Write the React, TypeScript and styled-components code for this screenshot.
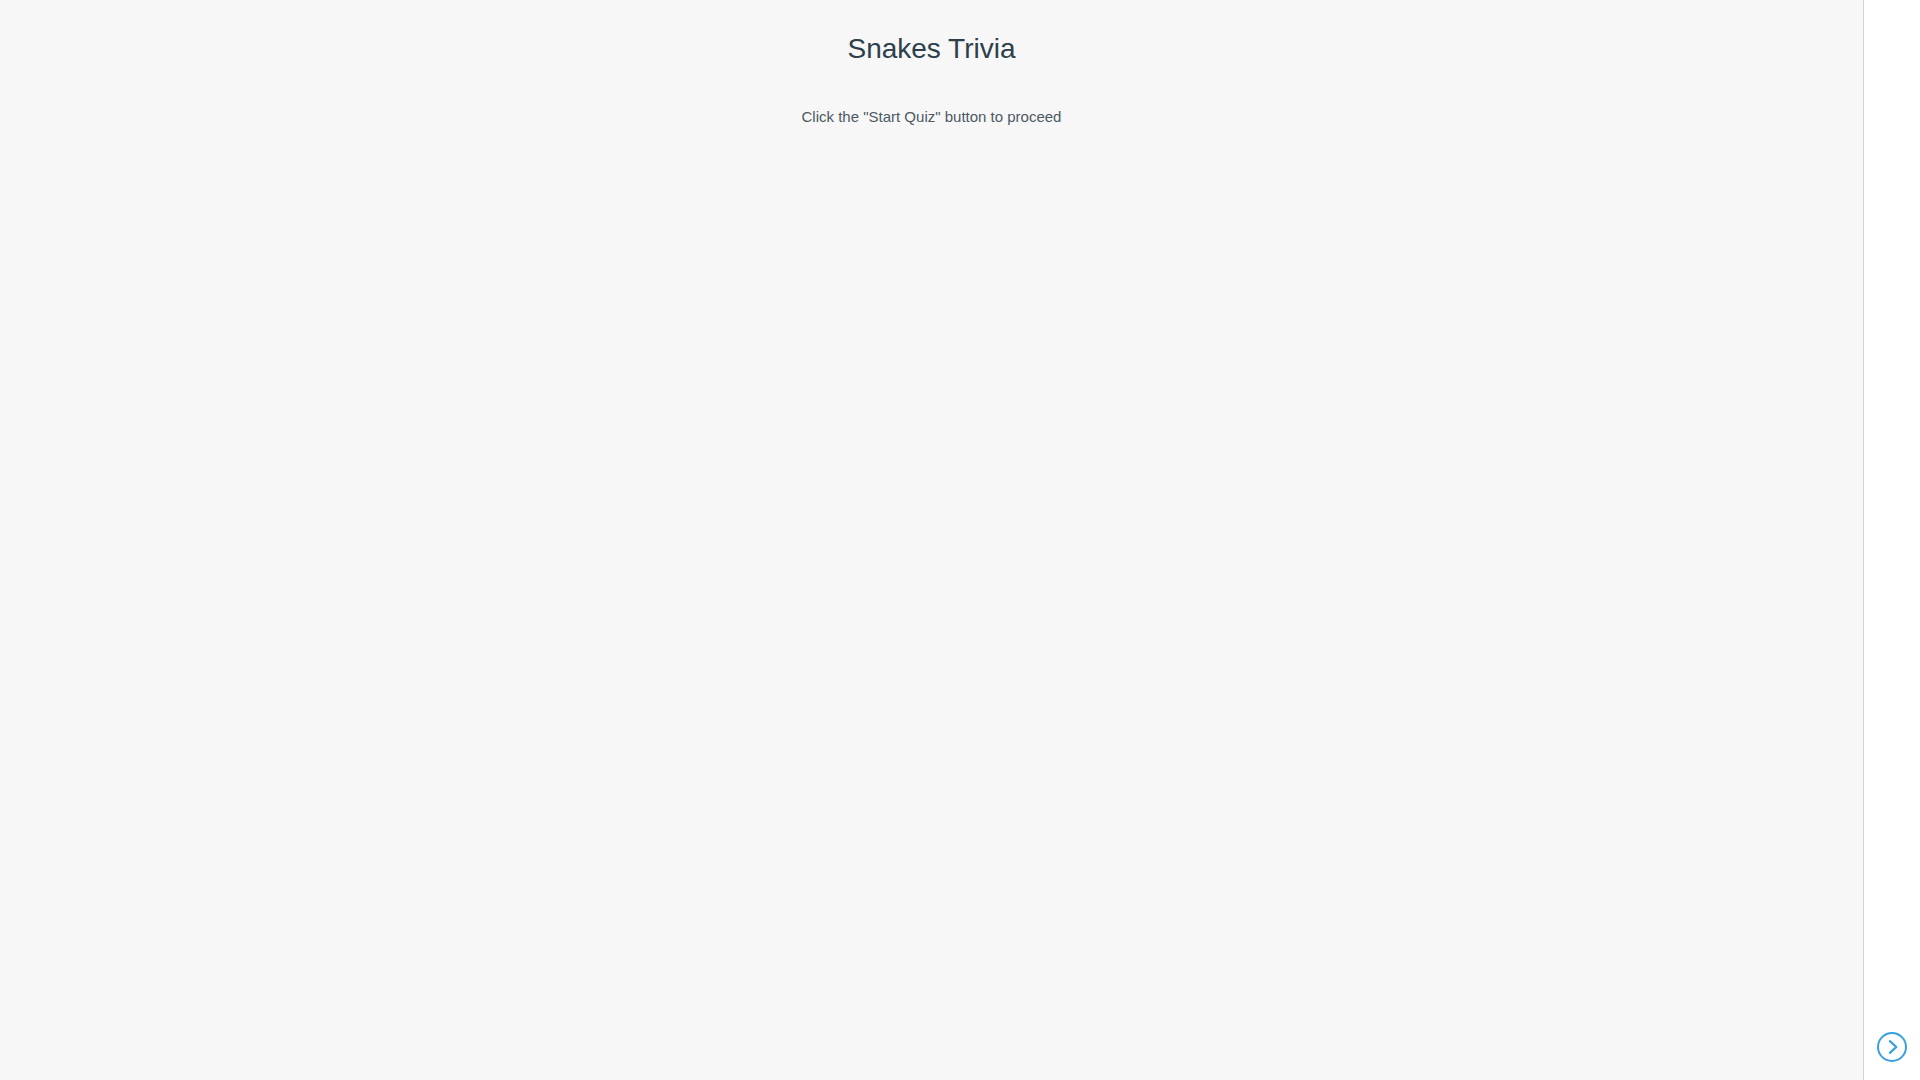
import React from 'react';
import styled, { createGlobalStyle } from 'styled-components';

const GlobalStyle = createGlobalStyle`
  * { box-sizing: border-box; }
  body {
    margin: 0;
    font-family: "Liberation Sans", Arial, Helvetica, sans-serif;
  }
`;

const Page = styled.div`
  display: flex;
  min-height: 100vh;
  background: #f7f7f7;
`;

const Content = styled.main`
  flex: 1;
  display: flex;
  flex-direction: column;
  align-items: center;
  gap: 40px;
  padding-top: 33px;
`;

const Title = styled.h1`
  margin: 0;
  font-size: 28px;
  line-height: 32px;
  font-weight: 400;
  color: #2d3f4b;
`;

const Hint = styled.p`
  margin: 0;
  font-size: 15px;
  line-height: 24px;
  color: #4c5a64;
`;

const Sidebar = styled.aside`
  flex: none;
  display: flex;
  flex-direction: column;
  justify-content: flex-end;
  align-items: center;
  width: 57px;
  padding-bottom: 18px;
  border-left: 1px solid #d4d4d4;
  background: #fff;
`;

const NextButton = styled.button`
  display: flex;
  padding: 0;
  border: 0;
  background: none;
  color: #3a9fe0;
  cursor: pointer;
`;

export default function App() {
  return (
    <Page>
      <GlobalStyle />
      <Content>
        <Title>Snakes Trivia</Title>
        <Hint>Click the "Start Quiz" button to proceed</Hint>
      </Content>
      <Sidebar>
        <NextButton type="button" aria-label="Start Quiz">
          <svg width="30" height="30" viewBox="0 0 30 30" fill="none" stroke="currentColor" strokeWidth="2" aria-hidden="true">
            <circle cx="15" cy="15" r="14" />
            <path d="M12.9 9.2 19.3 15l-6.4 5.8" strokeWidth="2.3" strokeLinecap="round" strokeLinejoin="round" />
          </svg>
        </NextButton>
      </Sidebar>
    </Page>
  );
}
